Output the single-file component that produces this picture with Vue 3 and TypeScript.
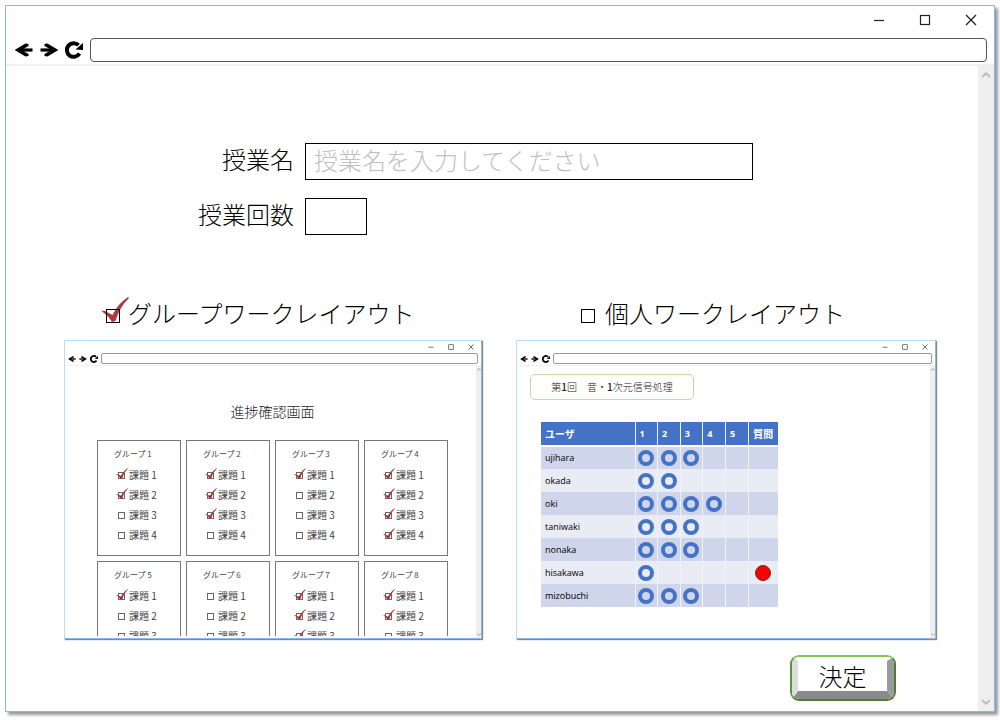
<script setup lang="ts">
import { ref } from 'vue'

interface Group {
  name: string
  done: boolean[]
}

interface Member {
  name: string
  finished: number
  question: boolean
}

const lessonName = ref('')
const lessonCount = ref('')
const groupLayout = ref(true)
const personalLayout = ref(false)

const groups: Group[] = [
  { name: 'グループ 1', done: [true, true, false, false] },
  { name: 'グループ 2', done: [true, true, true, false] },
  { name: 'グループ 3', done: [true, false, false, false] },
  { name: 'グループ 4', done: [true, true, true, true] },
  { name: 'グループ 5', done: [true, false, false] },
  { name: 'グループ 6', done: [false, false, false] },
  { name: 'グループ 7', done: [true, true, true] },
  { name: 'グループ 8', done: [true, true, false] },
]

const members: Member[] = [
  { name: 'ujihara', finished: 3, question: false },
  { name: 'okada', finished: 2, question: false },
  { name: 'oki', finished: 4, question: false },
  { name: 'taniwaki', finished: 3, question: false },
  { name: 'nonaka', finished: 3, question: false },
  { name: 'hisakawa', finished: 1, question: true },
  { name: 'mizobuchi', finished: 3, question: false },
]
</script>

<template>
  <div class="page">
    <svg class="symbols" aria-hidden="true">
      <symbol id="i-arrow" viewBox="0 0 18 14">
        <path d="M4 7H17.500" fill="none" stroke="#000" stroke-width="3.200" />
        <path d="M0 7.200V6.800L10.500 0.500L13.500 1V3L6.500 7L13.500 11V13L10.500 13.500Z" />
      </symbol>
      <symbol id="i-reload" viewBox="0 0 18 18">
        <path d="M14.500 12.500A6.800 6.800 0 1 1 13.500 4.200" fill="none" stroke="#000" stroke-width="4" />
        <path d="M18 2V9L10.500 8.500Z" />
      </symbol>
      <symbol id="i-min" viewBox="0 0 12 12">
        <path d="M1 6.500H11" stroke="#222" stroke-width="1.200" />
      </symbol>
      <symbol id="i-max" viewBox="0 0 12 12">
        <rect x="1.500" y="1.500" width="9" height="9" fill="none" stroke="#222" stroke-width="1.200" />
      </symbol>
      <symbol id="i-close" viewBox="0 0 12 12">
        <path d="M1 1L11 11M11 1L1 11" stroke="#222" stroke-width="1.300" />
      </symbol>
      <symbol id="i-up" viewBox="0 0 8 6">
        <path d="M0 6V3.500L4 0L8 3.500V6L4 2.800Z" fill="#bdbdbd" />
      </symbol>
      <symbol id="i-check" viewBox="0 0 28 25">
        <path d="M0 13.500L4 14L11.500 18C15 10.500 20 4.500 27 0L28 1C21 8 17.500 15 14.500 24L11 25L7.500 20L3 16Z" />
      </symbol>
    </svg>

    <div class="window">
      <header class="chrome">
        <div class="controls">
          <button type="button" aria-label="最小化"><svg><use href="#i-min" /></svg></button>
          <button type="button" aria-label="最大化"><svg><use href="#i-max" /></svg></button>
          <button type="button" aria-label="閉じる"><svg><use href="#i-close" /></svg></button>
        </div>
        <div class="nav">
          <button type="button" aria-label="戻る"><svg class="arrow"><use href="#i-arrow" /></svg></button>
          <button type="button" aria-label="進む"><svg class="arrow forward"><use href="#i-arrow" /></svg></button>
          <button type="button" aria-label="再読み込み"><svg class="reload"><use href="#i-reload" /></svg></button>
          <input class="address" type="text" aria-label="アドレス" />
        </div>
      </header>

      <div class="view">
        <main class="content">
          <form class="fields" @submit.prevent>
            <label for="lesson-name">授業名</label>
            <input id="lesson-name" v-model="lessonName" type="text" placeholder="授業名を入力してください" />
            <label for="lesson-count">授業回数</label>
            <input id="lesson-count" v-model="lessonCount" class="count" type="text" />
          </form>

          <div class="layouts">
            <section class="layout">
              <div class="choice">
                <span class="tick">
                  <input id="layout-group" v-model="groupLayout" type="checkbox" />
                  <svg v-if="groupLayout"><use href="#i-check" /></svg>
                </span>
                <label for="layout-group">グループワークレイアウト</label>
              </div>
              <div class="window mini">
                <div class="chrome">
                  <div class="controls">
                    <span><svg><use href="#i-min" /></svg></span>
                    <span><svg><use href="#i-max" /></svg></span>
                    <span><svg><use href="#i-close" /></svg></span>
                  </div>
                  <div class="nav">
                    <svg class="arrow"><use href="#i-arrow" /></svg>
                    <svg class="arrow forward"><use href="#i-arrow" /></svg>
                    <svg class="reload"><use href="#i-reload" /></svg>
                    <span class="address"></span>
                  </div>
                </div>
                <div class="view">
                  <div class="progress">
                    <h2>進捗確認画面</h2>
                    <div class="groups">
                      <div v-for="(group, g) in groups" :key="group.name" class="group">
                        <h3>{{ group.name }}</h3>
                        <div v-for="(done, t) in group.done" :key="t" class="task">
                          <span class="tick">
                            <input :id="`task-${g}-${t}`" type="checkbox" :checked="done" />
                            <svg v-if="done"><use href="#i-check" /></svg>
                          </span>
                          <label :for="`task-${g}-${t}`">課題 {{ t + 1 }}</label>
                        </div>
                      </div>
                    </div>
                  </div>
                  <div class="scrollbar">
                    <svg><use href="#i-up" /></svg>
                    <svg class="down"><use href="#i-up" /></svg>
                  </div>
                </div>
              </div>
            </section>

            <section class="layout personal">
              <div class="choice">
                <span class="tick">
                  <input id="layout-personal" v-model="personalLayout" type="checkbox" />
                  <svg v-if="personalLayout"><use href="#i-check" /></svg>
                </span>
                <label for="layout-personal">個人ワークレイアウト</label>
              </div>
              <div class="window mini">
                <div class="chrome">
                  <div class="controls">
                    <span><svg><use href="#i-min" /></svg></span>
                    <span><svg><use href="#i-max" /></svg></span>
                    <span><svg><use href="#i-close" /></svg></span>
                  </div>
                  <div class="nav">
                    <svg class="arrow"><use href="#i-arrow" /></svg>
                    <svg class="arrow forward"><use href="#i-arrow" /></svg>
                    <svg class="reload"><use href="#i-reload" /></svg>
                    <span class="address"></span>
                  </div>
                </div>
                <div class="view">
                  <div class="roster">
                    <h2>第<b>1</b>回　音・<b>1</b>次元信号処理</h2>
                    <table>
                      <thead>
                        <tr>
                          <th class="user" scope="col">ユーザ</th>
                          <th v-for="n in 5" :key="n" class="step" scope="col">{{ n }}</th>
                          <th class="question" scope="col">質問</th>
                        </tr>
                      </thead>
                      <tbody>
                        <tr v-for="member in members" :key="member.name">
                          <td class="user">{{ member.name }}</td>
                          <td v-for="n in 5" :key="n">
                            <span v-if="n <= member.finished" class="ring"></span>
                          </td>
                          <td><span v-if="member.question" class="alert"></span></td>
                        </tr>
                      </tbody>
                    </table>
                  </div>
                  <div class="scrollbar">
                    <svg><use href="#i-up" /></svg>
                    <svg class="down"><use href="#i-up" /></svg>
                  </div>
                </div>
              </div>
            </section>
          </div>

          <button class="submit" type="button"><span>決定</span></button>
        </main>
        <div class="scrollbar">
          <svg><use href="#i-up" /></svg>
          <svg class="down"><use href="#i-up" /></svg>
        </div>
      </div>
    </div>
  </div>
</template>

<style>
body {
  margin: 0;
  background: #fff;
}
</style>

<style scoped>
* {
  box-sizing: border-box;
}

.page {
  display: flex;
  min-height: 100vh;
  padding: 5px 5px 8px;
  font-family: 'Noto Sans CJK JP', sans-serif;
  font-weight: 300;
  color: #000;
}

.symbols {
  position: absolute;
  width: 0;
  height: 0;
}

svg {
  display: block;
}

button {
  padding: 0;
  border: 0;
  background: none;
  color: inherit;
  font: inherit;
}

h2,
h3 {
  margin: 0;
  font-weight: 400;
}

.window {
  display: flex;
  flex: 1;
  flex-direction: column;
  min-width: 0;
  border: 1px solid #83b9f3;
  background: #fff;
  box-shadow: 3px 3px 3px #999;
}

.chrome {
  border-bottom: 2px solid #efefef;
}

.controls {
  display: flex;
  justify-content: flex-end;
  height: 28px;
}

.controls > * {
  display: flex;
  align-items: center;
  justify-content: center;
  width: 46px;
}

.controls svg {
  width: 12px;
  height: 12px;
}

.nav {
  display: flex;
  align-items: center;
  gap: 7px;
  padding: 4px 7px 2px 9px;
}

.arrow {
  width: 18px;
  height: 14px;
}

.forward {
  transform: scaleX(-1);
}

.reload {
  width: 18px;
  height: 18px;
}

.address {
  flex: 1;
  min-width: 0;
  height: 24px;
  padding: 0 8px;
  border: 1px solid #555;
  border-radius: 4px;
  background: #fff;
}

.view {
  display: flex;
  flex: 1;
  min-height: 0;
}

.scrollbar {
  display: flex;
  flex: none;
  flex-direction: column;
  align-items: center;
  justify-content: space-between;
  width: 16px;
  padding: 6px 0;
  background: #efefef;
}

.scrollbar svg {
  width: 8px;
  height: 6px;
}

.down {
  transform: scaleY(-1);
}

.content {
  display: flex;
  flex: 1;
  flex-direction: column;
  min-width: 0;
  padding: 77px 42px 10px 58px;
}

.fields {
  display: grid;
  grid-template-columns: auto minmax(0, 448px);
  justify-content: start;
  gap: 18px 11px;
  padding-left: 134px;
  font-size: 24px;
  line-height: 32px;
}

.fields label {
  height: 37px;
  text-align: right;
  white-space: nowrap;
}

.fields input {
  width: 100%;
  height: 37px;
  padding: 0 8px 4px;
  border: 1px solid #000;
  border-radius: 0;
  background: #fff;
  font: inherit;
}

.fields input.count {
  width: 62px;
}

.fields input::placeholder {
  color: #bfbfbf;
  opacity: 1;
}

.layouts {
  display: grid;
  grid-template-columns: 418fr 420fr;
  gap: 34px;
  margin-top: 57px;
}

.choice {
  display: flex;
  align-items: center;
  gap: 8px;
  height: 48px;
  padding-left: 42px;
  font-size: 24px;
  line-height: 36px;
  white-space: nowrap;
}

.choice label {
  padding-bottom: 6px;
}

.personal .choice {
  gap: 10px;
  padding-left: 65px;
}

.tick {
  position: relative;
  z-index: 0;
  display: block;
  flex: none;
}

.tick input {
  display: block;
  width: 14px;
  height: 14px;
  margin: 0;
  border: 1px solid #000;
  border-radius: 0;
  appearance: none;
}

.tick svg {
  position: absolute;
  top: -12px;
  left: -5px;
  z-index: -1;
  width: 28px;
  height: 25px;
  fill: #ae3c3f;
  pointer-events: none;
}

.mini {
  height: 299px;
  border-color: #b9dcfb;
  border-right-color: #8fb8de;
  border-bottom-color: #8fb8de;
  box-shadow: 1px 1px 1px #888;
}

.mini .chrome {
  border-bottom: 1px solid #efefef;
}

.mini .controls {
  height: 11px;
}

.mini .controls > * {
  width: 20px;
}

.mini .controls svg {
  width: 6px;
  height: 6px;
}

.mini .nav {
  gap: 3px;
  padding: 1px 3px 1px 3px;
}

.mini .arrow {
  width: 8px;
  height: 6px;
}

.mini .reload {
  width: 8px;
  height: 8px;
}

.mini .address {
  height: 11px;
  padding: 0;
  border-color: #999;
  border-radius: 2px;
}

.mini .scrollbar {
  width: 5px;
  padding: 2px 0;
}

.mini .scrollbar svg {
  width: 4px;
  height: 3px;
}

.progress {
  flex: 1;
  min-width: 0;
  margin-bottom: 2px;
  padding: 35px 28px 0 32px;
  overflow: hidden;
}

.progress h2 {
  color: #222;
  font-size: 14px;
  font-weight: 300;
  line-height: 20px;
  text-align: center;
}

.groups {
  display: grid;
  grid-template-columns: repeat(4, 1fr);
  gap: 5px;
  margin-top: 19px;
}

.group {
  min-width: 0;
  padding: 7px 0 10px 16px;
  border: 1px solid #777;
}

.group h3 {
  margin-bottom: 5px;
  color: #444;
  font-size: 8px;
  font-weight: 400;
  line-height: 12px;
}

.task {
  display: flex;
  align-items: center;
  gap: 4px;
  height: 20px;
  padding-left: 4px;
  color: #444;
  font-size: 10px;
  font-weight: 400;
  line-height: 20px;
  white-space: nowrap;
}

.task .tick input {
  width: 7px;
  height: 7px;
  border-color: #666;
}

.task .tick svg {
  top: -4px;
  left: -2px;
  width: 12px;
  height: 11px;
  fill: #b02428;
}

.roster {
  flex: 1;
  min-width: 0;
  padding: 8px 13px;
  overflow: hidden;
}

.roster h2 {
  width: 164px;
  border: 1px solid #bcdba6;
  border-radius: 5px;
  color: #222;
  font-size: 10px;
  font-weight: 300;
  line-height: 24px;
  text-align: center;
}

.roster b {
  font-weight: 500;
}

table {
  width: 237px;
  margin: 22px 0 0 11px;
  border-collapse: collapse;
  table-layout: fixed;
  font-family: 'Open Sans', 'Noto Sans CJK JP', sans-serif;
  font-size: 9px;
  font-weight: 400;
}

th,
td {
  height: 23px;
  padding: 0;
  border: 0 solid #fff;
  border-left: 1px solid #f0f2fa;
  line-height: 12px;
  text-align: center;
}

th {
  height: 24px;
  border-bottom: 2px solid #fff;
  background: #4472c4;
  color: #fff;
  font-weight: 700;
}

th.step {
  padding-left: 4px;
  text-align: left;
}

th.user {
  width: 94px;
  font-size: 10px;
}

th.question {
  width: 30px;
  font-size: 10px;
}

th.user,
td.user {
  padding-left: 4px;
  border-left: 0;
  text-align: left;
}

tbody tr {
  background: #e9ebf5;
}

tbody tr:nth-child(odd) {
  background: #cfd5ea;
}

.ring,
.alert {
  display: block;
  width: 16px;
  height: 16px;
  margin: 0 auto;
  border-radius: 50%;
}

.ring {
  border: 4px solid #4472c4;
}

.alert {
  border: 1px solid #7a2020;
  background: #f00;
}

.submit {
  align-self: flex-end;
  margin: 16px 40px 0 0;
  width: 106px;
  height: 46px;
  border: 2px solid #70ad47;
  border-color: #82c558 #4f7d33 #4f7d33 #5f963c;
  border-radius: 9px;
  font-size: 24px;
}

.submit span {
  display: flex;
  align-items: center;
  justify-content: center;
  height: 42px;
  border-width: 4px 7px 8px 6px;
  border-style: solid;
  border-color: #fff #9a9a9a #8a8a8a #dcdcdc;
  border-radius: 7px;
  line-height: 30px;
}
</style>
